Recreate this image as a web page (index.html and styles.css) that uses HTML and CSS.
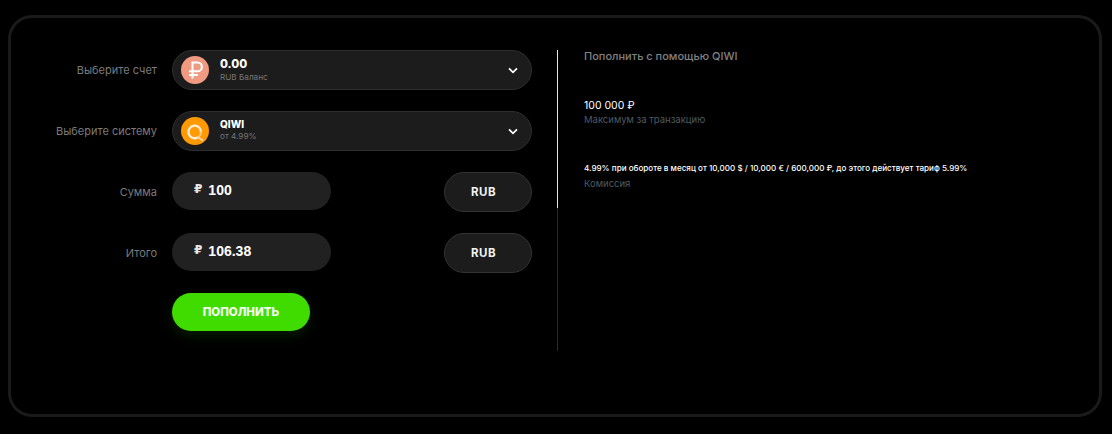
FILE: index.html
```html
<!DOCTYPE html>
<html lang="ru">
<head>
<meta charset="utf-8">
<title>Пополнить</title>
<link rel="stylesheet" href="styles.css">
</head>
<body>
<main class="card">
  <form class="form">
    <div class="row">
      <div class="label">Выберите счет</div>
      <div class="select">
        <svg class="icon" viewBox="0 0 28 28"><circle cx="14" cy="14" r="14" fill="#f09a82"/><path d="M11.500 22.500V6.500h5a4.400 4.400 0 0 1 0 8.800H8M8 19h9" fill="none" stroke="#fff" stroke-width="2.100"/></svg>
        <div class="select-text"><div class="big">0.00</div><div class="sub">RUB Баланс</div></div>
        <svg class="chev" viewBox="0 0 10 7"><path d="M1 1.300l4 4 4-4" fill="none" stroke="#fff" stroke-width="1.700"/></svg>
      </div>
    </div>
    <div class="row">
      <div class="label">Выберите систему</div>
      <div class="select">
        <svg class="icon" viewBox="0 0 28 28"><circle cx="14" cy="14" r="14" fill="#ff9a05"/><path d="M16.500 20.600A6.300 6.300 0 1 1 20 15.500" fill="none" stroke="#ffedd6" stroke-width="2.300"/><path d="M20 15.500a6.300 6.300 0 0 1-3.500 5.100" fill="none" stroke="#ffc777" stroke-width="2"/><path d="M16.500 20l5.500 3.500" fill="none" stroke="#ffd9a6" stroke-width="1.800"/></svg>
        <div class="select-text select-text-sys"><div class="name">QIWI</div><div class="sub">от 4.99%</div></div>
        <svg class="chev" viewBox="0 0 10 7"><path d="M1 1.300l4 4 4-4" fill="none" stroke="#fff" stroke-width="1.700"/></svg>
      </div>
    </div>
    <div class="row">
      <div class="label">Сумма</div>
      <div class="input"><span class="cur">₽</span><span>100</span></div>
      <div class="unit">RUB</div>
    </div>
    <div class="row">
      <div class="label">Итого</div>
      <div class="input"><span class="cur">₽</span><span>106.38</span></div>
      <div class="unit">RUB</div>
    </div>
    <div class="row row-action">
      <div class="label"></div>
      <button class="submit" type="button">ПОПОЛНИТЬ</button>
    </div>
  </form>
  <aside class="info">
    <h2 class="title">Пополнить с помощью QIWI</h2>
    <div class="value">100 000 ₽</div>
    <div class="caption">Максимум за транзакцию</div>
    <div class="note">4.99% при обороте в месяц от 10,000 $ / 10,000 € / 600,000 ₽, до этого действует тариф 5.99%</div>
    <div class="caption caption-wide">Комиссия</div>
  </aside>
</main>
</body>
</html>
```
FILE: styles.css
```css
* { box-sizing: border-box; }
html, body { margin: 0; height: 100%; background: #000; }
body { padding: 15px 10px 17px 8px; font-family: Inter, "Noto Sans", sans-serif; overflow: hidden; }
.card {
  height: 402px;
  border: 3px solid #1a1a1a;
  border-radius: 24px;
  padding: 32px 0 0 0;
  display: flex;
  align-items: flex-start;
}
.form { width: 521px; display: flex; flex-direction: column; gap: 21px; }
.row { display: flex; align-items: flex-start; height: 40px; }
.row-action { margin-top: -1px; }
.label {
  width: 146px; margin-right: 15px; text-align: right;
  font-size: 11px; line-height: 40px; color: #7b7b7b;
}
.select {
  width: 360px; height: 40px; border: 1px solid #2e2e2e; border-radius: 20px; background: #1c1c1c;
  display: flex; align-items: center; padding: 0 13px 0 8px;
}
.icon { width: 28px; height: 28px; flex: none; }
.select-text { margin-left: 11px; flex: 1; }
.select-text-sys { margin-top: -3px; }
.big { font-size: 11.500px; font-weight: 800; line-height: 15px; color: #fff; }
.name { font-size: 10px; font-weight: 800; line-height: 13px; color: #fff; }
.sub { font-size: 8.200px; line-height: 11px; color: #767676; }
.chev { width: 10px; height: 7px; flex: none; }
.input {
  width: 159px; height: 38px; border-radius: 19px; background: #212121;
  display: flex; align-items: center; gap: 6px; padding: 0 0 2px 22px;
  font-family: "Liberation Sans", sans-serif; font-size: 14px; font-weight: 700; color: #fff;
}
.cur { font-size: 12px; line-height: 12px; margin-top: -3px; font-family: "DejaVu Sans", sans-serif; color: #e6e6e6; }
.unit {
  width: 88px; height: 40px; margin-left: 113px; padding-right: 9px; border: 1px solid #333; border-radius: 20px; background: #1c1c1c;
  text-align: center; line-height: 39px; font-size: 11.500px; font-weight: 700; letter-spacing: .4px; color: #f2f2f2;
}
.submit {
  width: 138px; height: 38px; border: 0; border-radius: 19px; background: #40dc00; padding: 0;
  font-family: Inter, sans-serif; font-size: 11.500px; font-weight: 800; color: #f4fff0;
  box-shadow: 0 5px 12px rgba(64, 220, 0, .13);
}
.info {
  width: 500px; height: 301px; margin-left: 25px; padding-left: 26px;
  border-left: 1px solid #2a2a2a; position: relative; color: #fff;
}
.info::before { content: ""; position: absolute; left: -1px; top: 0; width: 1px; height: 158px; background: #e8e8e8; }
.title { margin: -1px 0 0; font-size: 11px; font-weight: 500; line-height: 14px; color: #808080; }
.value { margin-top: 36px; font-size: 10.500px; line-height: 13px; }
.caption { font-size: 9.500px; line-height: 13px; margin-top: 1px; color: #4e5a62; }
.caption-wide { margin-top: 3px; }
.note { margin-top: 36px; font-size: 8.100px; font-weight: 500; line-height: 12px; white-space: nowrap; }
```
